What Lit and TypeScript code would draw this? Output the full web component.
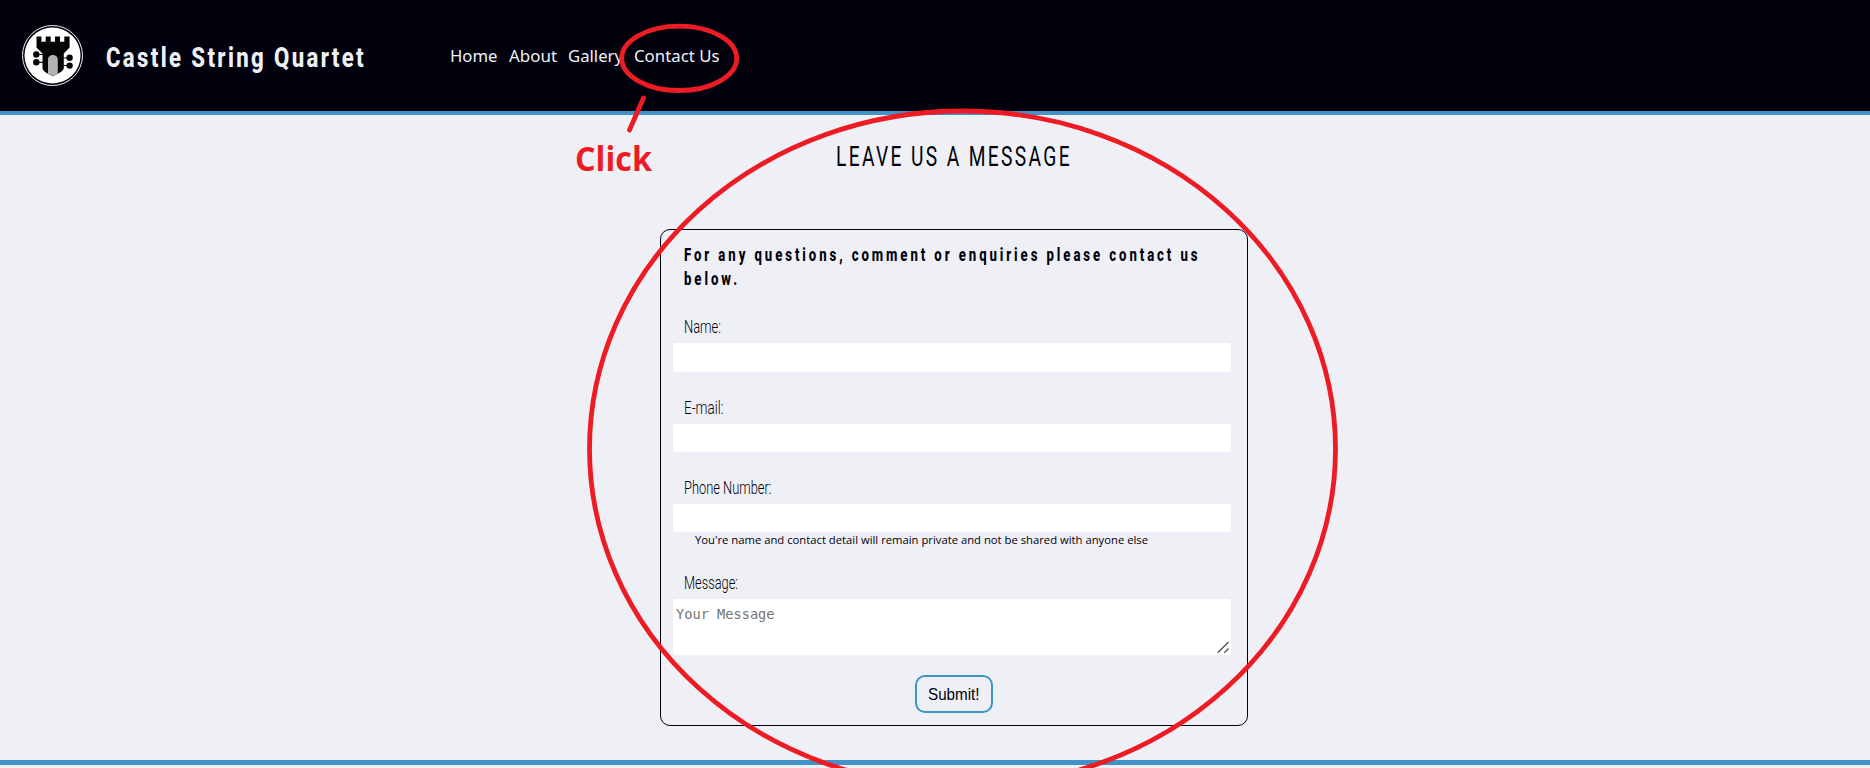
import { LitElement, html, css, svg } from "lit";
import { customElement, property } from "lit/decorators.js";

/* A single line of text set to an exact measure. */
@customElement("fit-text")
class FitText extends LitElement {
  @property() text = "";
  @property({ type: Number }) measure = 100;
  @property({ type: Number }) height = 20;
  @property({ type: Number }) baseline = 16;
  static styles = css`
    :host { display: block; }
    svg { display: block; overflow: visible; }
    text { fill: currentColor; }
  `;
  render() {
    return html`<svg width=${this.measure} height=${this.height}>
      ${svg`<text x="0" y=${this.baseline} textLength=${this.measure} lengthAdjust="spacingAndGlyphs">${this.text}</text>`}
    </svg>`;
  }
}

@customElement("app-root")
class AppRoot extends LitElement {
  static styles = css`
    :host {
      display: block; position: relative; height: 768px; overflow: hidden;
      background: #eff0f6; color: #00010d; font-family: "Open Sans", sans-serif;
    }
    * { box-sizing: border-box; }
    header {
      display: flex; align-items: flex-start; height: 115px;
      background: #00010d; border-bottom: 4px solid #4292c7; color: #eff0f6;
    }
    .logo { display: block; width: 61px; height: 61px; margin: 25px 0 0 22px; }
    .brand { margin: 36px 0 0 23px; width: 261px; font: 800 28px Roboto, sans-serif; letter-spacing: 3px; }
    nav { display: flex; margin: 44px 0 0 83px; gap: 11px; font: 400 16px "Noto Sans", sans-serif; }
    nav a { color: #eff0f6; text-decoration: none; }
    main { height: 645px; display: flex; flex-direction: column; align-items: center; padding-left: 38px; }
    .title { margin-top: 23px; font: 400 28.4px Roboto, sans-serif; letter-spacing: 3.5px; }
    form {
      width: 588px; height: 497px; margin-top: 51px; border: 1px solid #00010d;
      border-radius: 10px; padding: 12px 16px 0 12px;
    }
    .intro { margin-left: 11px; font: 800 18px Roboto, sans-serif; letter-spacing: 4px; height: 73px; }
    .label { margin-left: 11px; font: 350 18.3px Roboto, sans-serif; }
    .field { display: block; width: 558px; height: 28px; border: 0; border-radius: 3px; background: #fff; margin: 0 0 23px; }
    .tall { height: 29px; }
    .phone { margin-bottom: 0; }
    .note { margin: 0 0 19px 22px; font-size: 11px; }
    .area { position: relative; width: 558px; height: 56px; }
    textarea {
      display: block; width: 558px; height: 56px; border: 0; border-radius: 3px; padding: 7px 3px;
      background: #fff; font: 13.65px "DejaVu Sans Mono", monospace; resize: none;
    }
    textarea::placeholder { color: #757575; }
    .grip { position: absolute; right: 1px; bottom: 1px; }
    button {
      display: flex; justify-content: center; align-items: center; width: 78px; height: 38px;
      margin: 20px 0 0 242px; padding: 0; background: #eff0f6; color: #00010d;
      border: 2px solid #4292c7; border-radius: 10px; font: 16px "Liberation Sans", sans-serif;
    }
    footer { border-top: 5px solid #4292c7; height: 8px; }
    .marks { position: absolute; left: 0; top: 0; pointer-events: none; }
    .click { position: absolute; left: 575px; top: 138px; color: #ed1c24; font: 700 34px "Open Sans", sans-serif; }
  `;

  line(cls: string, text: string, measure: number, height: number, baseline: number) {
    return html`<fit-text class=${cls} .text=${text} .measure=${measure} .height=${height} .baseline=${baseline}></fit-text>`;
  }

  render() {
    return html`
      <header>
        <svg class="logo" viewBox="22 25 61 61">
          <circle cx="52.5" cy="55.5" r="30" fill="none" stroke="#eff0f6" />
          <circle cx="52.5" cy="55.5" r="28" fill="#fff" />
          <path d="M36.5 36.5h4.900v5.200h4.300v-5.200h5v5.200h4.300v-5.200h5v5.200h4.300v-5.200h5.300V47.500L63.800 53.500V68c0 3-5.500 5.500-11 8.300-5.500-2.500-10.300-5.300-10.300-8.300V53.500L36.500 47.500z" fill="#050505" />
          <path d="M48 73.700V59.500c0-6 9.800-6 9.800 0v14.200l-5 2.300z" fill="#b2b2b2" />
          <path d="M36 54.500h7M36 62.300h7M63 58h6M63 65.500h6" stroke="#111" stroke-width="1.200" />
          <g fill="#080808"><circle cx="36.300" cy="54.500" r="3.200" /><circle cx="36.300" cy="62.300" r="3.200" /><circle cx="69.600" cy="57.800" r="3.200" /><circle cx="69.600" cy="65.600" r="3.200" /></g>
        </svg>
        ${this.line("brand", "Castle String Quartet", 260, 40, 30.5)}
        <nav>
          <a>${this.line("", "Home", 47.500, 24, 18)}</a>
          <a>${this.line("", "About", 48, 24, 18)}</a>
          <a>${this.line("", "Gallery", 55, 24, 18)}</a>
          <a>${this.line("", "Contact Us", 85.500, 24, 18)}</a>
        </nav>
      </header>
      <main>
        ${this.line("title", "LEAVE US A MESSAGE", 236, 40, 28)}
        <form>
          <div class="intro">
            ${this.line("", "For any questions, comment or enquiries please contact us", 516.500, 25, 18.500)}
            ${this.line("", "below.", 56, 25, 18)}
          </div>
          ${this.line("label", "Name:", 37, 28, 18)}
          <input class="field tall" type="text" />
          ${this.line("label", "E-mail:", 39.500, 29, 18.500)}
          <input class="field" type="text" />
          ${this.line("label", "Phone Number:", 87.500, 29, 18.500)}
          <input class="field phone" type="text" />
          ${this.line("note", "You're name and contact detail will remain private and not be shared with anyone else", 453, 20, 12)}
          ${this.line("label", "Message:", 54, 28, 18)}
          <div class="area">
            <textarea placeholder="Your Message"></textarea>
            <svg class="grip" width="13" height="13" stroke="#555" stroke-width="1.400"><path d="M.7 11.700L11.500 .900M7.300 11.700L11.500 7.500" /></svg>
          </div>
          <button type="button">${this.line("", "Submit!", 51.500, 20, 16)}</button>
        </form>
      </main>
      <footer></footer>
      <svg class="marks" width="1870" height="768" fill="none" stroke="#ed1c24" stroke-width="4.800" stroke-linecap="round">
        <ellipse cx="679.200" cy="58.300" rx="57.500" ry="32.200" />
        <path d="M643.500 98L629.500 130" />
        <ellipse cx="962.500" cy="449" rx="373" ry="338" />
      </svg>
      ${this.line("click", "Click", 77, 44, 33)}
    `;
  }
}
